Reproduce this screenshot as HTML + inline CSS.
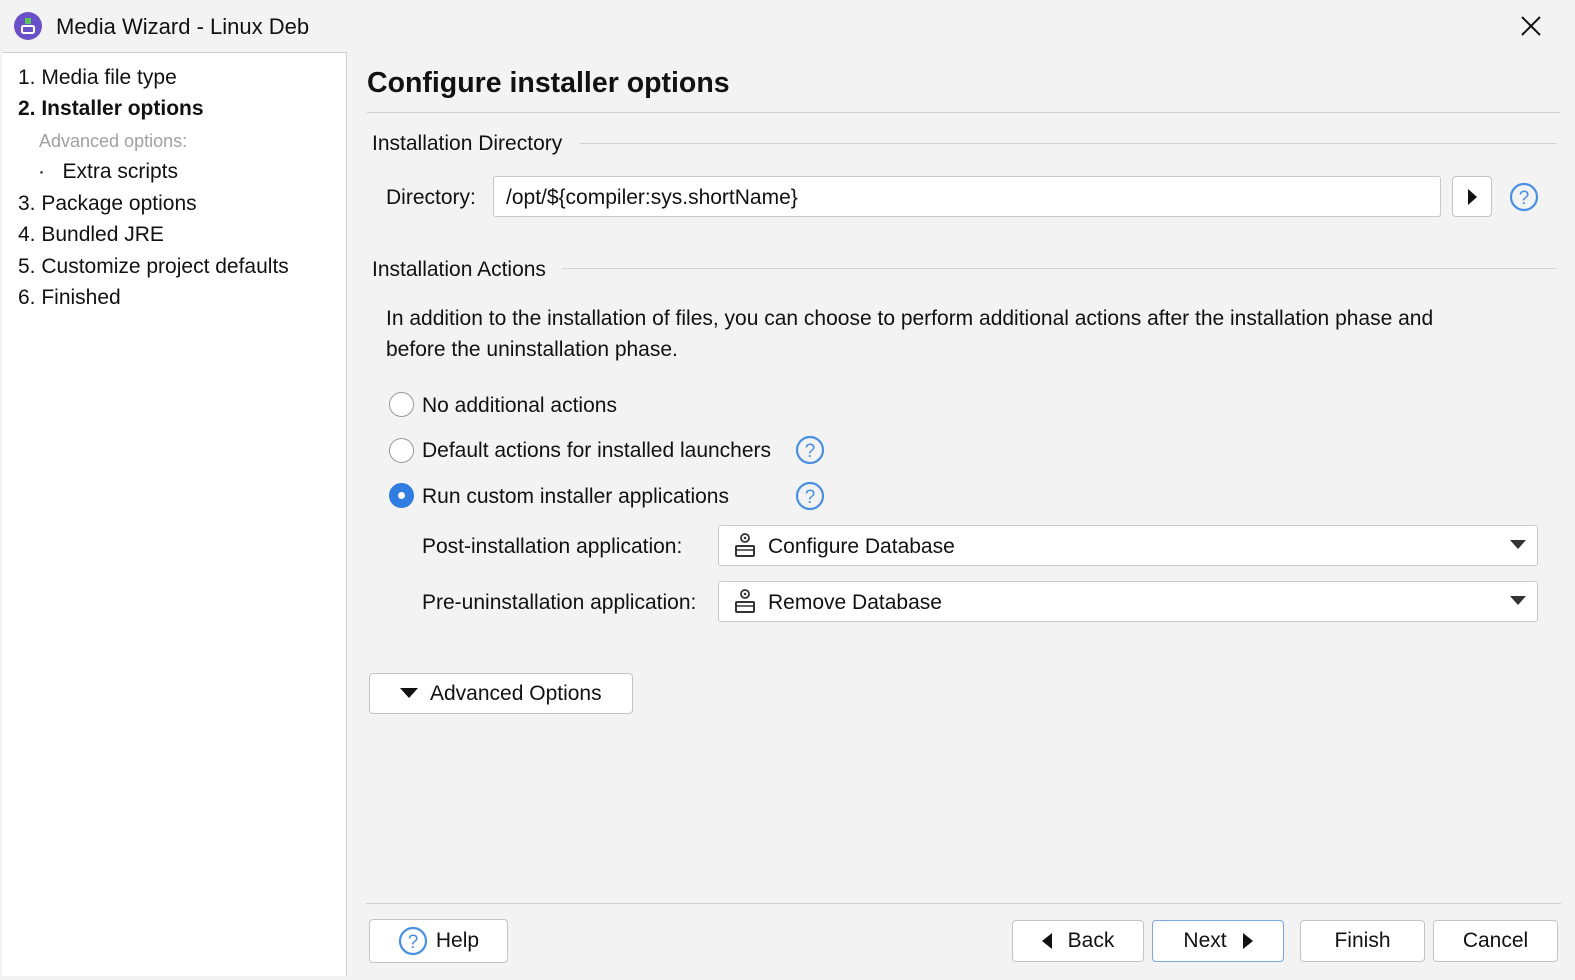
<!DOCTYPE html>
<html><head><meta charset="utf-8"><style>
*{margin:0;padding:0;box-sizing:border-box}
body{width:1575px;height:980px;background:#f3f3f3;font-family:"Liberation Sans",sans-serif;color:#111;position:relative;overflow:hidden;font-size:21px}
.a{position:absolute;white-space:nowrap}
.box{position:absolute;background:#fff;border:1px solid #c9c9c9;border-radius:3px}
.btn{position:absolute;background:#fff;border:1px solid #c4c4c4;border-radius:4px;display:flex;align-items:center;justify-content:center;font-size:21px}
.line{position:absolute;height:1px;background:#d4d4d4}
.radio{position:absolute;width:25px;height:25px;border-radius:50%;border:1.5px solid #9a9a9a;background:#fff}
.q{position:absolute}
</style></head><body>
<svg class="a" style="left:14px;top:12px" width="28" height="28" viewBox="0 0 28 28"><circle cx="14" cy="14" r="14" fill="#6a4fc8"/><rect x="8" y="14" width="12" height="7" rx="1.5" fill="none" stroke="#fff" stroke-width="2"/><rect x="11" y="6" width="6" height="6" fill="#5cc45c"/></svg>
<div class="a" style="left:56px;top:14px;font-size:22px">Media Wizard - Linux Deb</div>
<svg class="a" style="left:1520px;top:15px" width="22" height="22"><path d="M2 2L20 20M20 2L2 20" stroke="#111" stroke-width="2"/></svg>

<div class="a" style="left:2px;top:52px;width:345px;height:924px;background:#fff;border-right:1px solid #d0d0d0;border-top:1px solid #d0d0d0"></div>
<div class="a" style="left:18px;top:66px">1. Media file type</div>
<div class="a" style="left:18px;top:97px;font-weight:bold">2. Installer options</div>
<div class="a" style="left:39px;top:131px;font-size:18px;color:#a0a0a0">Advanced options:</div>
<div class="a" style="left:38px;top:160px">·&nbsp;&nbsp;&nbsp;Extra scripts</div>
<div class="a" style="left:18px;top:192px">3. Package options</div>
<div class="a" style="left:18px;top:223px">4. Bundled JRE</div>
<div class="a" style="left:18px;top:255px">5. Customize project defaults</div>
<div class="a" style="left:18px;top:286px">6. Finished</div>

<div class="a" style="left:367px;top:67px;font-size:28.5px;font-weight:bold">Configure installer options</div>
<div class="line" style="left:367px;top:112px;width:1193px;background:#cfcfcf"></div>
<div class="a" style="left:372px;top:132px">Installation Directory</div>
<div class="line" style="left:580px;top:143px;width:977px"></div>
<div class="a" style="left:386px;top:186px">Directory:</div>
<div class="box" style="left:493px;top:176px;width:948px;height:41px"></div>
<div class="a" style="left:506px;top:186px">/opt/${compiler:sys.shortName}</div>
<div class="btn" style="left:1452px;top:176px;width:40px;height:41px"><svg width="10" height="16"><path d="M1 0L10 8L1 16Z" fill="#111"/></svg></div>
<svg class="q" style="left:1509px;top:182px" width="30" height="30"><circle cx="15" cy="15" r="13" fill="none" stroke="#4a90e2" stroke-width="2.2"/><text x="15" y="22" text-anchor="middle" font-family="Liberation Sans" font-size="19" fill="#4a90e2">?</text></svg>

<div class="a" style="left:372px;top:258px">Installation Actions</div>
<div class="line" style="left:562px;top:268px;width:995px"></div>
<div class="a" style="left:386px;top:303px;line-height:31px;white-space:normal;width:1095px">In addition to the installation of files, you can choose to perform additional actions after the installation phase and before the uninstallation phase.</div>

<div class="radio" style="left:389px;top:392px"></div>
<div class="a" style="left:422px;top:394px">No additional actions</div>
<div class="radio" style="left:389px;top:438px"></div>
<div class="a" style="left:422px;top:439px">Default actions for installed launchers</div>
<svg class="q" style="left:795px;top:435px" width="30" height="30"><circle cx="15" cy="15" r="13" fill="none" stroke="#4a90e2" stroke-width="2.2"/><text x="15" y="22" text-anchor="middle" font-family="Liberation Sans" font-size="19" fill="#4a90e2">?</text></svg>
<div class="radio" style="left:389px;top:483px;background:#2f7de1;border-color:#2f7de1"><div style="position:absolute;left:8px;top:8px;width:7px;height:7px;border-radius:50%;background:#fff"></div></div>
<div class="a" style="left:422px;top:485px">Run custom installer applications</div>
<svg class="q" style="left:795px;top:481px" width="30" height="30"><circle cx="15" cy="15" r="13" fill="none" stroke="#4a90e2" stroke-width="2.2"/><text x="15" y="22" text-anchor="middle" font-family="Liberation Sans" font-size="19" fill="#4a90e2">?</text></svg>

<div class="a" style="left:422px;top:535px">Post-installation application:</div>
<div class="box" style="left:718px;top:525px;width:820px;height:41px"></div>
<svg class="a" style="left:733px;top:531px" width="26" height="28"><circle cx="12" cy="7" r="4" fill="none" stroke="#333" stroke-width="1.8"/><circle cx="12" cy="7" r="1.3" fill="#333"/><rect x="3" y="15" width="18" height="10" rx="1" fill="none" stroke="#333" stroke-width="2"/><path d="M3 19H21" stroke="#333" stroke-width="1.5"/></svg>
<div class="a" style="left:768px;top:535px">Configure Database</div>
<svg class="a" style="left:1510px;top:540px" width="16" height="10"><path d="M0 0H16L8 9Z" fill="#333"/></svg>

<div class="a" style="left:422px;top:591px">Pre-uninstallation application:</div>
<div class="box" style="left:718px;top:581px;width:820px;height:41px"></div>
<svg class="a" style="left:733px;top:587px" width="26" height="28"><circle cx="12" cy="7" r="4" fill="none" stroke="#333" stroke-width="1.8"/><circle cx="12" cy="7" r="1.3" fill="#333"/><rect x="3" y="15" width="18" height="10" rx="1" fill="none" stroke="#333" stroke-width="2"/><path d="M3 19H21" stroke="#333" stroke-width="1.5"/></svg>
<div class="a" style="left:768px;top:591px">Remove Database</div>
<svg class="a" style="left:1510px;top:596px" width="16" height="10"><path d="M0 0H16L8 9Z" fill="#333"/></svg>

<div class="btn" style="left:369px;top:673px;width:264px;height:41px;justify-content:flex-start;padding-left:30px"><svg width="18" height="11" style="margin-right:12px"><path d="M0 0H18L9 10Z" fill="#111"/></svg>Advanced Options</div>

<div class="line" style="left:366px;top:903px;width:1195px;background:#cfcfcf"></div>
<div class="btn" style="left:369px;top:919px;width:139px;height:44px"><svg width="30" height="30" style="margin-right:8px"><circle cx="15" cy="15" r="13" fill="none" stroke="#4a90e2" stroke-width="2.2"/><text x="15" y="22" text-anchor="middle" font-family="Liberation Sans" font-size="19" fill="#4a90e2">?</text></svg>Help</div>
<div class="btn" style="left:1012px;top:920px;width:132px;height:42px"><svg width="10" height="16" style="margin-right:16px"><path d="M10 0L0 8L10 16Z" fill="#111"/></svg>Back</div>
<div class="btn" style="left:1152px;top:920px;width:132px;height:42px;border-color:#7aa7de"><span>Next</span><svg width="10" height="16" style="margin-left:16px"><path d="M0 0L10 8L0 16Z" fill="#111"/></svg></div>
<div class="btn" style="left:1300px;top:920px;width:125px;height:42px">Finish</div>
<div class="btn" style="left:1433px;top:920px;width:125px;height:42px">Cancel</div>
</body></html>
